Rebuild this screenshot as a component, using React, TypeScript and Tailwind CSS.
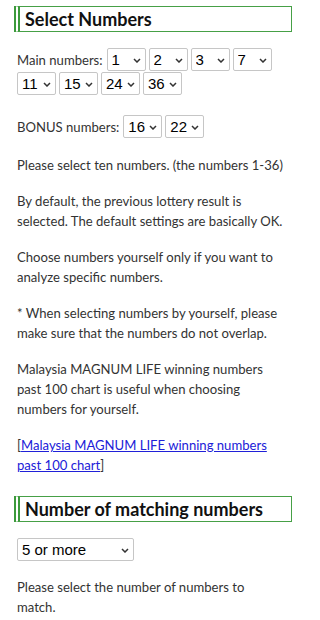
const nums = Array.from({ length: 36 }, (_, i) => i + 1);

function Chevron({ className }: { className: string }) {
  return (
    <svg
      className={className}
      width="8"
      height="5"
      viewBox="0 0 8 5"
      fill="none"
      stroke="#333"
      strokeWidth="1.5"
    >
      <path d="M1 1l3 3 3-3" />
    </svg>
  );
}

function NumSelect({ value }: { value: number }) {
  return (
    <span className="relative inline-flex">
      <select
        defaultValue={value}
        className="h-[23px] w-[39px] appearance-none rounded-[2px] border border-[#c6c6c6] bg-white pl-[4px] font-['Liberation_Sans',Arial,sans-serif] text-[15px] leading-none text-black"
      >
        {nums.map((n) => (
          <option key={n} value={n}>
            {n}
          </option>
        ))}
      </select>
      <Chevron className="pointer-events-none absolute right-[5px] top-[10px]" />
    </span>
  );
}

function Heading({ children }: { children: React.ReactNode }) {
  return (
    <h2 className="-ml-[3px] -mr-[6px] flex h-[26px] items-center border border-l-[6px] border-[#46a046] border-l-[#3c9a3c] [border-left-style:double] pl-[5px] font-['Lato',sans-serif] text-[18px] font-bold leading-none text-[#111]">
      {children}
    </h2>
  );
}

export default function App() {
  return (
    <div className="min-h-[620px] w-[300px] overflow-hidden bg-white pb-4 pl-[17px] pr-[14px] pt-[6px] font-['Lato','Noto_Sans',sans-serif] text-[13.1px] leading-[20px] text-[#333]">
      <Heading>Select Numbers</Heading>

      <div className="mt-4 flex flex-wrap items-center gap-x-[3px] gap-y-[1px]">
        <span className="mr-[1px]">Main numbers:</span>
        {[1, 2, 3, 7, 11, 15, 24, 36].map((n) => (
          <NumSelect key={n} value={n} />
        ))}
      </div>

      <div className="mt-5 flex items-center gap-x-[3px]">
        <span className="mr-[1px]">BONUS numbers:</span>
        <NumSelect value={16} />
        <NumSelect value={22} />
      </div>

      <p className="mt-[17px]">Please select ten numbers. (the numbers 1-36)</p>
      <p className="mt-4">
        By default, the previous lottery result is selected. The default settings are basically OK.
      </p>
      <p className="mt-4">Choose numbers yourself only if you want to analyze specific numbers.</p>
      <p className="mt-4">
        * When selecting numbers by yourself, please make sure that the numbers do not overlap.
      </p>
      <p className="mt-4">
        Malaysia MAGNUM LIFE winning numbers past 100 chart is useful when choosing numbers for yourself.
      </p>
      <p className="mt-4">
        [<a href="#" className="text-[#2020d8] underline">Malaysia MAGNUM LIFE winning numbers past 100 chart</a>]
      </p>

      <div className="mt-[21px]">
        <Heading>Number of matching numbers</Heading>
      </div>

      <div className="relative mt-4 inline-flex">
        <select
          defaultValue="5"
          className="h-[23px] w-[117px] appearance-none rounded-[2px] border border-[#c6c6c6] bg-white pl-[4px] font-['Liberation_Sans',Arial,sans-serif] text-[15px] leading-none text-black"
        >
          <option value="3">3 or more</option>
          <option value="4">4 or more</option>
          <option value="5">5 or more</option>
          <option value="6">6 or more</option>
        </select>
        <Chevron className="pointer-events-none absolute right-[5px] top-[10px]" />
      </div>

      <p className="mt-4">Please select the number of numbers to match.</p>
    </div>
  );
}
